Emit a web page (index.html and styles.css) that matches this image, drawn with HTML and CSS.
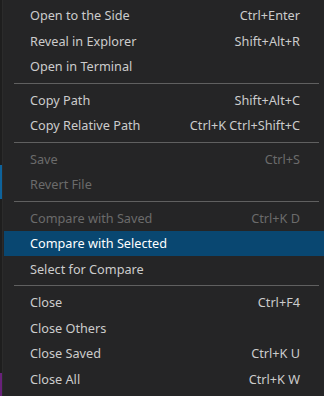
FILE: index.html
```html
<!DOCTYPE html>
<html lang="en">
<head>
    <meta charset="UTF-8">
    <title>Context Menu</title>
    <link rel="stylesheet" href="styles.css">
</head>
<body>
    <div class="screen">
        <!-- sliver of the editor behind the menu -->
        <div class="behind">
            <div class="behind-block behind-gap-a"></div>
            <div class="behind-block behind-blue"></div>
            <div class="behind-block behind-gap-b"></div>
            <div class="behind-block behind-purple"></div>
        </div>

        <div class="menu">
            <div class="menu-item"><span class="label">Open to the Side</span><span class="keys">Ctrl+Enter</span></div>
            <div class="menu-item"><span class="label">Reveal in Explorer</span><span class="keys">Shift+Alt+R</span></div>
            <div class="menu-item"><span class="label">Open in Terminal</span><span class="keys"></span></div>
            <div class="separator"></div>
            <div class="menu-item"><span class="label">Copy Path</span><span class="keys">Shift+Alt+C</span></div>
            <div class="menu-item"><span class="label">Copy Relative Path</span><span class="keys">Ctrl+K Ctrl+Shift+C</span></div>
            <div class="separator"></div>
            <div class="menu-item disabled"><span class="label">Save</span><span class="keys">Ctrl+S</span></div>
            <div class="menu-item disabled"><span class="label">Revert File</span><span class="keys"></span></div>
            <div class="separator"></div>
            <div class="menu-item disabled"><span class="label">Compare with Saved</span><span class="keys">Ctrl+K D</span></div>
            <div class="menu-item active"><span class="label">Compare with Selected</span><span class="keys"></span></div>
            <div class="menu-item"><span class="label">Select for Compare</span><span class="keys"></span></div>
            <div class="separator"></div>
            <div class="menu-item"><span class="label">Close</span><span class="keys">Ctrl+F4</span></div>
            <div class="menu-item"><span class="label">Close Others</span><span class="keys"></span></div>
            <div class="menu-item"><span class="label">Close Saved</span><span class="keys">Ctrl+K U</span></div>
            <div class="menu-item"><span class="label">Close All</span><span class="keys">Ctrl+K W</span></div>
        </div>
    </div>
</body>
</html>
```

FILE: styles.css
```css
* {
    margin: 0;
    padding: 0;
    box-sizing: border-box;
}

html, body {
    width: 324px;
    height: 396px;
    overflow: hidden;
}

body {
    background: #1e1e1e;
    font-family: "Noto Sans", "Open Sans", sans-serif;
    font-size: 12.7px;
    color: #cccccc;
}

.screen {
    display: flex;
    height: 396px;
}

/* editor peeking out on the left */
.behind {
    width: 3px;
    flex-shrink: 0;
    display: flex;
    flex-direction: column;
    background: #1e1e1e;
    border-right: 1px solid #2b2b2b;
}

.behind-gap-a {
    height: 165px;
}

.behind-blue {
    height: 34px;
    background: #0e639c;
}

.behind-gap-b {
    height: 174px;
}

.behind-purple {
    flex: 1;
    background: #68217a;
}

.menu {
    width: 324px;
    flex-shrink: 0;
    background: #252526;
    padding-top: 2.5px;
}

.menu-item {
    display: flex;
    justify-content: space-between;
    align-items: center;
    height: 25.5px;
    padding: 0 27px 0 27px;
    white-space: nowrap;
}

.menu-item.disabled {
    color: #6b6b6b;
}

.menu-item.active {
    background: #094771;
    color: #ffffff;
    margin-left: 1px;
    padding-left: 26px;
}

.separator {
    height: 1px;
    margin: 3.5px 8px 3.5px 11px;
    background: #606060;
}
```
